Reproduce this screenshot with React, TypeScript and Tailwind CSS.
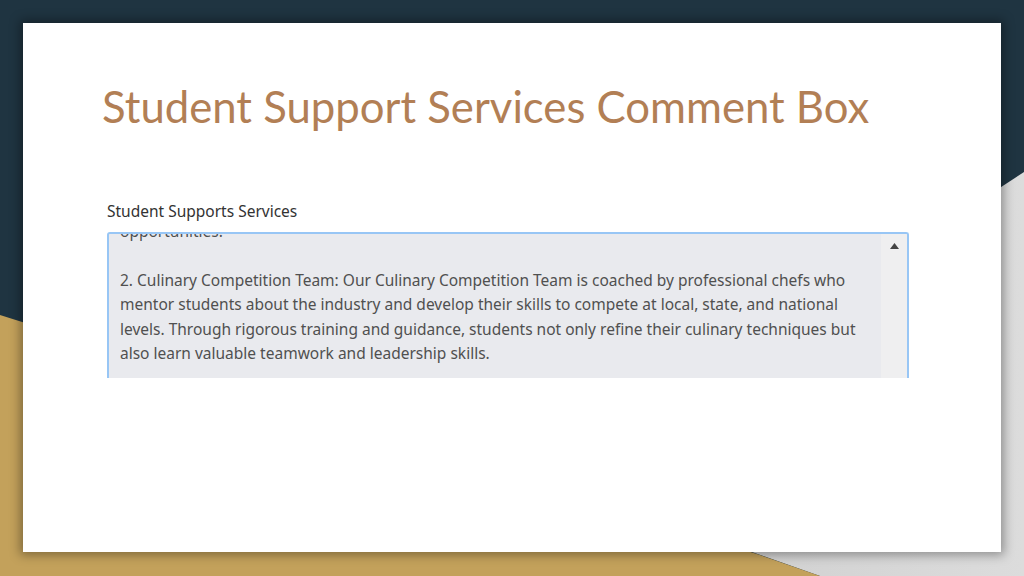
import React from "react";

const LINES = [
  "opportunities.",
  "",
  "2. Culinary Competition Team: Our Culinary Competition Team is coached by professional chefs who",
  "mentor students about the industry and develop their skills to compete at local, state, and national",
  "levels. Through rigorous training and guidance, students not only refine their culinary techniques but",
  "also learn valuable teamwork and leadership skills.",
  "",
];

function Backdrop() {
  return (
    <svg className="absolute inset-0" width="1024" height="576" viewBox="0 0 1024 576">
      <defs>
        <linearGradient id="gray" x1="0" y1="0" x2="1" y2="0">
          <stop offset="0" stopColor="#c9c9c9" />
          <stop offset="1" stopColor="#dcdcdc" />
        </linearGradient>
      </defs>
      <rect width="1024" height="576" fill="#1f3441" />
      <polygon points="1024,172 1024,576 820,576 551,481" fill="url(#gray)" />
      <polygon points="0,315 760,555 820,576 0,576" fill="#c3a15b" />
    </svg>
  );
}

export default function App() {
  return (
    <div className="relative w-[1024px] h-[576px] overflow-hidden">
      <Backdrop />
      <div className="relative pt-[23px] pl-[23px]">
        <div className="w-[978px] h-[529px] bg-white shadow-[0_0_10px_3px_rgba(0,0,0,0.35)] pl-[79px] pt-[62px]">
          <h1
            className="text-[43.7px] leading-none text-[#b27f55]"
            style={{ fontFamily: "Lato, 'Noto Sans', sans-serif" }}
          >
            Student Support Services Comment Box
          </h1>

          <div className="mt-[75px] pl-[5px]" style={{ fontFamily: "'Noto Sans', 'Open Sans', sans-serif" }}>
            <div className="text-[15.5px] leading-none text-[#333]">Student Supports Services</div>
            <div className="mt-[13px] w-[802px] h-[146px] border-2 border-b-0 border-[#98c6f5] rounded-t-[3px] bg-[#e9eaee] flex overflow-hidden">
              <div className="flex-1 pl-[11px] -mt-[15px] text-[15.5px] leading-[24.4px] text-[#505050]">
                {LINES.map((l, i) => (
                  <div key={i} className="whitespace-nowrap h-[24.4px]">
                    {l}
                  </div>
                ))}
              </div>
              <div className="w-[26px] bg-[#efeff0] flex justify-center pt-[9px]">
                <svg width="9" height="6" viewBox="0 0 9 6">
                  <polygon points="4.5,0 9,6 0,6" fill="#444" />
                </svg>
              </div>
            </div>
          </div>
        </div>
      </div>
    </div>
  );
}
